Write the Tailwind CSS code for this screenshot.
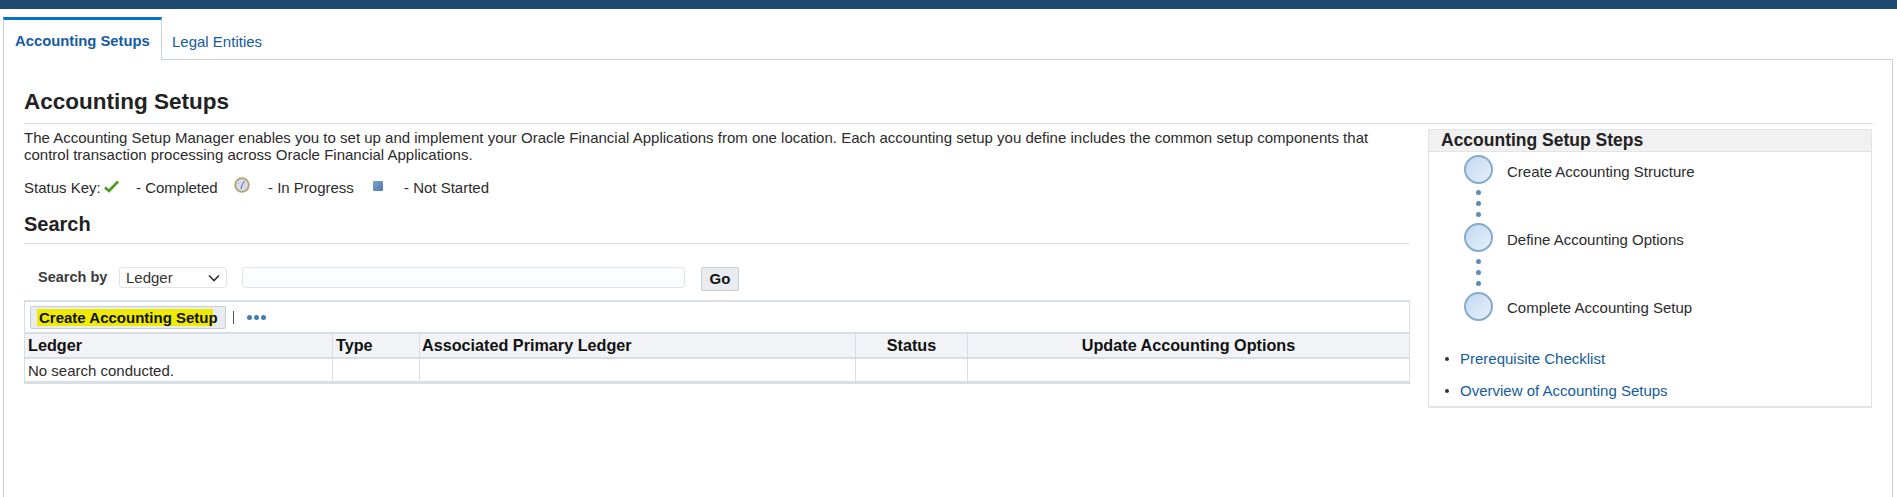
<!DOCTYPE html>
<html><head><meta charset="utf-8"><title>Accounting Setups</title>
<script src="https://cdn.jsdelivr.net/npm/@tailwindcss/browser@4"></script></head>
<body class="bg-white font-['Liberation_Sans',Arial,sans-serif] text-[15px] leading-[17px] text-[#2b2b2b] h-[497px] overflow-hidden">
<div class="h-[9px] bg-[#1f4a6f]"></div>
<div class="mx-[3px] w-[1890px] mt-[8px]">
  <div class="flex h-[43px] items-stretch">
    <div class="w-[159px] shrink-0 border-t-[3px] border-t-[#0572ce] border-x border-x-[#c4ced7] flex items-center pl-[11px] font-bold text-[14.8px] text-[#145c9e] pt-[3px] whitespace-nowrap">Accounting Setups</div>
    <div class="flex-1 border-b border-b-[#c4ced7] flex items-center pl-[10px] text-[#145c9e] pt-[6px]">Legal Entities</div>
  </div>
  <div class="border-x border-x-[#c4ced7] h-[438px] pl-[20px] pr-[20px]">
    <h1 class="h-[64px] pt-[29px] border-b border-b-[#d6dfe6] text-[22.5px] leading-[26px] font-bold w-[1849px] text-[#222]">Accounting Setups</h1>
    <div class="flex">
      <div class="w-[1386px] shrink-0">
        <p class="mt-[5px] h-[34px] w-[1386px]">The Accounting Setup Manager enables you to set up and implement your Oracle Financial Applications from one location. Each accounting setup you define includes the common setup components that control transaction processing across Oracle Financial Applications.</p>
        <div class="mt-[16px] h-[17px] flex items-center">
          <span class="w-[80px]">Status Key:</span>
          <svg class="w-[15px] h-[13px] -mt-[3px]" viewBox="0 0 15 13"><path d="M1 7.5 L5 11 L14 1.5" fill="none" stroke="#4c9a1f" stroke-width="2.6"/></svg>
          <span class="ml-[17px] w-[98px]">- Completed</span>
          <svg class="w-[16px] h-[16px] -mt-[5px]" viewBox="0 0 16 16"><circle cx="8" cy="8" r="6.8" fill="#d6dcf0" stroke="#b9a06a" stroke-width="1.8"/><path d="M8 8 L10.5 4 M8 8 L7 12 M4.5 6.5 L5 7" stroke="#5a6a9a" stroke-width="1"/></svg>
          <span class="ml-[18px] w-[105px]">- In Progress</span>
          <span class="w-[10px] h-[10px] -mt-[4px] rounded-[1px] bg-linear-to-br from-[#7f9fd0] to-[#4f78b0]"></span>
          <span class="ml-[21px]">- Not Started</span>
        </div>
        <h2 class="h-[48px] pt-[16px] border-b border-b-[#d6dfe6] text-[20px] leading-[24px] font-bold text-[#222]">Search</h2>
        <div class="mt-[22px] h-[25px] flex items-center">
          <span class="ml-[14px] mb-[2px] w-[81px] font-bold text-[14.5px] text-[#3a3a3a]">Search by</span>
          <div class="mb-[2px] w-[108px] h-[21px] border border-[#dfe4e8] rounded-[3px] flex items-center justify-between pl-[6px] pr-[6px] text-[#333]">Ledger
            <svg class="w-[12px] h-[8px]" viewBox="0 0 12 8"><path d="M1 1.5 L6 6.5 L11 1.5" fill="none" stroke="#333" stroke-width="1.6"/></svg>
          </div>
          <div class="mb-[2px] ml-[15px] w-[443px] h-[21px] border border-[#dfe4e8] rounded-[3px] bg-[#fcfdfe]"></div>
          <div class="ml-[16px] w-[38px] h-[24px] border border-[#c4ced7] rounded-[2px] bg-[#e8ecef] flex items-center justify-center font-bold text-[#111]">Go</div>
        </div>
        <div class="mt-[9px] border-x border-t-2 border-[#d6dfe6]">
          <div class="h-[30px] flex items-center">
            <div class="ml-[5px] w-[196px] h-[23px] border border-[#c4ced7] rounded-[2px] bg-[#e8ecef] font-bold text-[#111] flex items-center pl-[8px]"><span class="bg-[#eeea00] pl-[2px] -ml-[2px] h-[17px] w-[176px] whitespace-nowrap">Create Accounting Setup</span></div>
            <div class="ml-[7px] w-px h-[13px] bg-[#555]"></div>
            <div class="ml-[13px] flex gap-[2px]"><span class="w-[5px] h-[5px] rounded-full bg-[#3f7fb5]"></span><span class="w-[5px] h-[5px] rounded-full bg-[#3f7fb5]"></span><span class="w-[5px] h-[5px] rounded-full bg-[#3f7fb5]"></span></div>
          </div>
          <div class="grid grid-cols-[307px_87px_436px_112px_1fr] h-[27px] bg-[#f1f3f6] border-y-2 border-[#d6dfe6] font-bold text-[16.2px] text-[#111] items-stretch">
            <div class="pl-[3px] flex items-center">Ledger</div>
            <div class="pl-[3px] flex items-center border-l border-[#d6dfe6]">Type</div>
            <div class="pl-[2px] flex items-center border-l border-[#d6dfe6]">Associated Primary Ledger</div>
            <div class="flex items-center justify-center border-l border-[#d6dfe6]">Status</div>
            <div class="flex items-center justify-center border-l border-[#d6dfe6]">Update Accounting Options</div>
          </div>
          <div class="grid grid-cols-[307px_87px_436px_112px_1fr] h-[25px] border-b-[3px] border-[#d6dfe6] items-stretch">
            <div class="pl-[3px] flex items-center">No search conducted.</div>
            <div class="border-l border-[#d6dfe6]"></div>
            <div class="border-l border-[#d6dfe6]"></div>
            <div class="border-l border-[#d6dfe6]"></div>
            <div class="border-l border-[#d6dfe6]"></div>
          </div>
        </div>
      </div>
      <aside class="ml-[18px] mt-[5px] w-[445px] h-[279px] border border-[#dfe4e8] border-b-2 rounded-[1px]">
        <h3 class="h-[22px] bg-[#f1f1f1] border-b border-[#dfe4e8] pl-[12px] text-[17.5px] leading-[21px] font-bold text-[#222]">Accounting Setup Steps</h3>
        <div class="ml-[35px] mt-[3px]">
          <div class="flex items-center h-[29px]"><span class="w-[29px] h-[29px] rounded-full border-2 border-[#86abcf] bg-linear-to-br from-[#c2d9f0] to-[#e6f1fb]"></span><span class="ml-[14px] pt-[3px]">Create Accounting Structure</span></div>
          <div class="w-[29px] h-[39px] flex flex-col items-center justify-center gap-[6px]"><span class="w-[5px] h-[5px] rounded-full bg-[#5b8db8]"></span><span class="w-[5px] h-[5px] rounded-full bg-[#5b8db8]"></span><span class="w-[5px] h-[5px] rounded-full bg-[#5b8db8]"></span></div>
          <div class="flex items-center h-[29px]"><span class="w-[29px] h-[29px] rounded-full border-2 border-[#86abcf] bg-linear-to-br from-[#c2d9f0] to-[#e6f1fb]"></span><span class="ml-[14px] pt-[3px]">Define Accounting Options</span></div>
          <div class="w-[29px] h-[40px] flex flex-col items-center justify-center gap-[6px]"><span class="w-[5px] h-[5px] rounded-full bg-[#5b8db8]"></span><span class="w-[5px] h-[5px] rounded-full bg-[#5b8db8]"></span><span class="w-[5px] h-[5px] rounded-full bg-[#5b8db8]"></span></div>
          <div class="flex items-center h-[29px]"><span class="w-[29px] h-[29px] rounded-full border-2 border-[#86abcf] bg-linear-to-br from-[#c2d9f0] to-[#e6f1fb]"></span><span class="ml-[14px] pt-[1px]">Complete Accounting Setup</span></div>
        </div>
        <ul class="mt-[29px] ml-[16px] flex flex-col gap-[15px] text-[#145c9e]">
          <li class="flex items-center h-[17px]"><span class="w-[4px] h-[4px] rounded-full bg-[#333]"></span><span class="ml-[11px]">Prerequisite Checklist</span></li>
          <li class="flex items-center h-[17px]"><span class="w-[4px] h-[4px] rounded-full bg-[#333]"></span><span class="ml-[11px]">Overview of Accounting Setups</span></li>
        </ul>
      </aside>
    </div>
  </div>
</div>
</body></html>
